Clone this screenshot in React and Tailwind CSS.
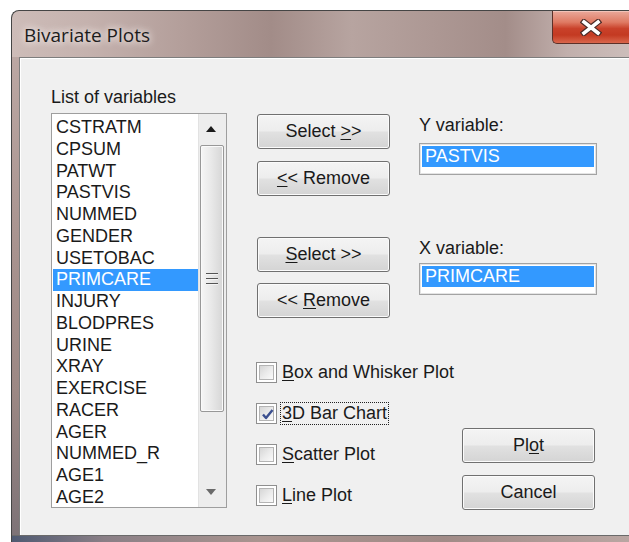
import React from "react";

const VARIABLES = [
  "CSTRATM",
  "CPSUM",
  "PATWT",
  "PASTVIS",
  "NUMMED",
  "GENDER",
  "USETOBAC",
  "PRIMCARE",
  "INJURY",
  "BLODPRES",
  "URINE",
  "XRAY",
  "EXERCISE",
  "RACER",
  "AGER",
  "NUMMED_R",
  "AGE1",
  "AGE2",
];

const font = { fontFamily: '"Liberation Sans", Arial, sans-serif' };

function Button({ children }) {
  return (
    <button
      type="button"
      className="h-[35px] w-[133px] flex items-center justify-center rounded-[3px] border border-[#707070] bg-[linear-gradient(to_bottom,#f4f4f4_0%,#ededed_48%,#e1e1e1_52%,#d4d4d4_100%)] shadow-[inset_0_0_0_1px_#fbfbfb] text-[18px] text-[#1a1a1a] whitespace-pre"
    >
      {children}
    </button>
  );
}

function Check({ checked, children, focused }) {
  return (
    <div className="h-[21px] flex items-center gap-[3px]">
      <div className="w-[21px] h-[21px] border border-[#8f8f8f] bg-white p-[2px]">
        <div className="relative w-full h-full border border-[#b4b4b4] bg-[linear-gradient(135deg,#d6d6d6_0%,#ececec_55%,#fafafa_100%)]">
          {checked && (
            <svg className="absolute inset-0" viewBox="0 0 15 15" width="15" height="15">
              <path d="M3 7.5 L6 11 L12.5 3" fill="none" stroke="#3b4f8f" strokeWidth="2.4" strokeLinejoin="round" />
            </svg>
          )}
        </div>
      </div>
      <span
        className={
          "text-[18px] leading-[21px] text-[#1a1a1a] px-[1px] " +
          (focused ? "border border-dotted border-[#222]" : "border border-transparent")
        }
      >
        {children}
      </span>
    </div>
  );
}

function ValueBox({ value }) {
  return (
    <div className="w-[178px] h-[32px] border border-[#a3a3a3] bg-white p-[2px] shadow-[inset_0_0_0_1px_#e4e4e4]">
      <div className="h-[21px] bg-[#3399ff] text-white text-[18px] leading-[21px] pl-[3px]">{value}</div>
    </div>
  );
}

function Scrollbar() {
  return (
    <div className="w-[28px] h-full flex flex-col bg-[#ededed] border-l border-[#e2e2e2]">
      <div className="h-[30px] flex items-center justify-center pr-[3px]">
        <svg width="10" height="6" viewBox="0 0 10 6">
          <path d="M0 6 L5 0 L10 6 Z" fill="#1b1b1b" />
        </svg>
      </div>
      <div className="flex-1 pt-[1px] pl-[1px] pr-[2px]">
        <div className="h-[267px] rounded-[2px] border border-[#989898] bg-[linear-gradient(to_right,#f6f6f6_0%,#e9e9e9_45%,#d6d6d6_100%)] shadow-[inset_0_0_0_1px_#fafafa] flex flex-col items-center justify-center gap-[3px]">
          <div className="w-[12px] h-[2px] bg-[#555] border-b border-[#f4f4f4]" />
          <div className="w-[12px] h-[2px] bg-[#555] border-b border-[#f4f4f4]" />
          <div className="w-[12px] h-[2px] bg-[#555] border-b border-[#f4f4f4]" />
        </div>
      </div>
      <div className="h-[30px] flex items-center justify-center pr-[3px]">
        <svg width="10" height="6" viewBox="0 0 10 6">
          <path d="M0 0 L10 0 L5 6 Z" fill="#6a6a6a" />
        </svg>
      </div>
    </div>
  );
}

function CloseButton() {
  return (
    <div className="w-[77px] h-[33px] rounded-bl-[5px] border-l border-b border-[#5c3028] bg-[linear-gradient(to_bottom,#eaa99b_0%,#df7a63_35%,#c9412a_55%,#c43a22_75%,#d9664c_100%)] shadow-[inset_0_1px_0_#f3c3b8] flex items-center justify-center">
      <svg width="22" height="17" viewBox="0 0 22 17">
        <path d="M4 3 L18 14 M18 3 L4 14" stroke="#4a2a26" strokeWidth="6" strokeLinecap="square" />
        <path d="M4 3 L18 14 M18 3 L4 14" stroke="#ffffff" strokeWidth="3.6" strokeLinecap="square" />
      </svg>
    </div>
  );
}

export default function App() {
  return (
    <div className="w-[629px] h-[542px] bg-white overflow-hidden" style={font}>
      <div className="ml-[11px] mt-[10px] w-[618px] h-[532px] flex flex-col rounded-tl-[8px] border-t border-l border-[#454545] bg-[linear-gradient(90deg,#cdbcb8_0%,#c5b2ae_12%,#b39e9a_28%,#a28c88_42%,#b7a4a0_55%,#ad9894_68%,#a38d89_80%,#c1afac_90%,#ccbdba_100%)]">
        {/* title bar */}
        <div className="h-[46px] flex items-start justify-between">
          <div className="pl-[12px] pt-[12px] text-[19px] leading-[24px] text-[#1c1c1c] [text-shadow:0_0_10px_#f3ecea,0_0_6px_#f3ecea]" style={{ fontFamily: '"Open Sans", "Noto Sans", sans-serif' }}>
            Bivariate Plots
          </div>
          <CloseButton />
        </div>

        <div className="flex-1 flex">
          {/* left frame edge */}
          <div className="w-[7px] bg-[linear-gradient(to_bottom,#bba7a3_0%,#a8938f_40%,#9c8884_70%,#7d7377_100%)]" />

          {/* client area */}
          <div className="flex-1 bg-[#f0f0f0] border-t border-l border-[#7d7d7d] shadow-[inset_1px_1px_0_#ffffff]">
            <div className="flex items-start pt-[28px] pl-[31px]">
              {/* variables list */}
              <div className="flex flex-col">
                <div className="h-[27px] text-[18px] leading-[22px] text-[#1a1a1a]">List of variables</div>
                <div className="w-[176px] h-[395px] border border-[#9e9e9e] bg-white flex">
                  <div className="w-[146px] pl-[1px] pt-[3px] overflow-hidden">
                    {VARIABLES.map((v) => (
                      <div
                        key={v}
                        className={
                          "h-[21.75px] leading-[21.75px] pl-[3px] text-[18px] whitespace-nowrap " +
                          (v === "PRIMCARE" ? "bg-[#3399ff] text-white" : "text-[#1a1a1a]")
                        }
                      >
                        {v}
                      </div>
                    ))}
                  </div>
                  <Scrollbar />
                </div>
              </div>

              {/* selection controls */}
              <div className="ml-[30px] mt-[28px] flex flex-col">
                <div className="flex">
                  <div className="flex flex-col gap-[12px]">
                    <Button>
                      {"Select "}
                      <u className="underline-offset-2">&gt;</u>
                      {">"}
                    </Button>
                    <Button>
                      <u className="underline-offset-2">&lt;</u>
                      {"< Remove"}
                    </Button>
                  </div>
                  <div className="ml-[29px] flex flex-col">
                    <div className="h-[22px] text-[18px] leading-[22px] text-[#1a1a1a]">Y variable:</div>
                    <div className="mt-[7px]">
                      <ValueBox value="PASTVIS" />
                    </div>
                  </div>
                </div>

                <div className="flex mt-[41px]">
                  <div className="flex flex-col gap-[11px]">
                    <Button>
                      <u className="underline-offset-2">S</u>
                      {"elect >>"}
                    </Button>
                    <Button>
                      {"<< "}
                      <u className="underline-offset-2">R</u>
                      {"emove"}
                    </Button>
                  </div>
                  <div className="ml-[29px] flex flex-col">
                    <div className="h-[22px] text-[18px] leading-[22px] text-[#1a1a1a]">X variable:</div>
                    <div className="mt-[4px]">
                      <ValueBox value="PRIMCARE" />
                    </div>
                  </div>
                </div>

                <div className="flex mt-[44px]">
                  <div className="-ml-[1px] w-[206px] flex flex-col gap-[20px]">
                    <Check>
                      <u className="underline-offset-2">B</u>ox and Whisker Plot
                    </Check>
                    <Check checked focused>
                      <u className="underline-offset-2">3</u>D Bar Chart
                    </Check>
                    <Check>
                      <u className="underline-offset-2">S</u>catter Plot
                    </Check>
                    <Check>
                      <u className="underline-offset-2">L</u>ine Plot
                    </Check>
                  </div>
                  <div className="pt-[66px] flex flex-col gap-[12px]">
                    <Button>
                      Pl<u className="underline-offset-2">o</u>t
                    </Button>
                    <Button>Cancel</Button>
                  </div>
                </div>
              </div>
            </div>
          </div>
        </div>

        {/* bottom frame edge */}
        <div className="h-[7px] border-t border-[#6a6a6a] bg-[linear-gradient(90deg,#4f5a72_0%,#8a7f86_15%,#a9948f_40%,#a18b87_70%,#b9a6a2_100%)]" />
      </div>
    </div>
  );
}
